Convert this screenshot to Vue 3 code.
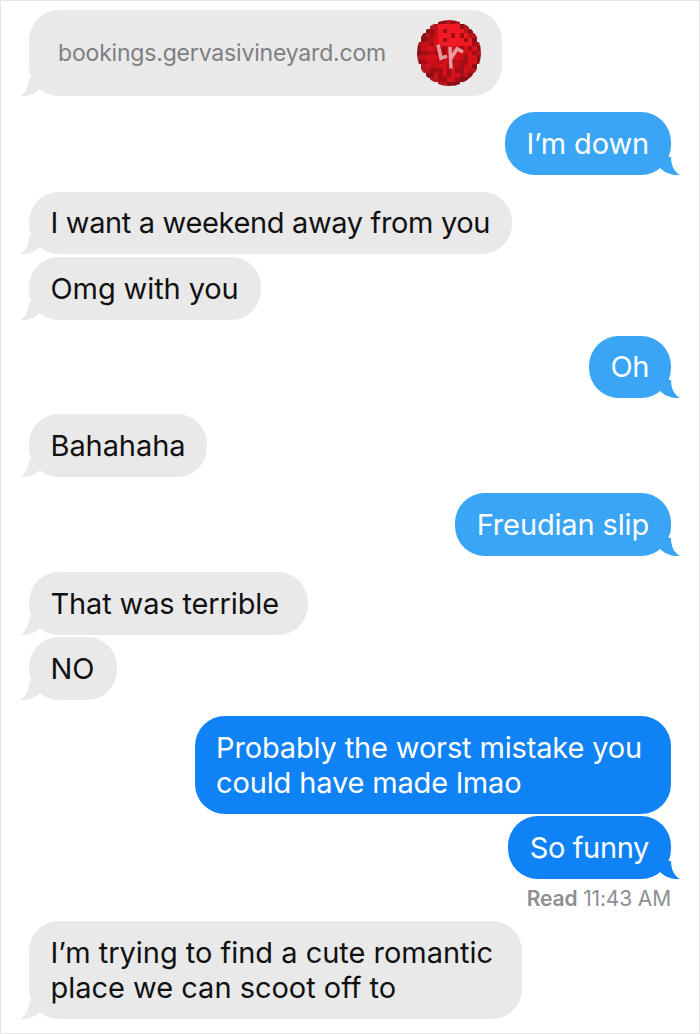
<script setup>
const messages = [
  { id: 1, side: 'in', lines: ['I want a weekend away from you'], gap: 17, spacing: -0.35 },
  { id: 2, side: 'in', lines: ['Omg with you'], gap: 3, spacing: -0.1 },
  { id: 3, side: 'out', tone: 'light', lines: ['Oh'], gap: 16, spacing: -0.45 },
  { id: 4, side: 'in', lines: ['Bahahaha'], gap: 16, spacing: -0.08 },
  { id: 5, side: 'out', tone: 'light', lines: ['Freudian slip'], gap: 16.5, spacing: -0.15 },
  { id: 6, side: 'in', lines: ['That was terrible'], gap: 16.5, spacing: -0.14, wide: true },
  { id: 7, side: 'in', lines: ['NO'], gap: 2.5, spacing: 0 },
  { id: 8, side: 'out', lines: ['Probably the worst mistake you', 'could have made lmao'], gap: 16.5, spacing: -0.15, noTail: true, wide: true },
  { id: 9, side: 'out', lines: ['So funny'], gap: 2.5, spacing: -0.35 },
]

// blocky low-res favicon, the reference is an upscaled thumbnail
const size = 15
const cell = 64 / size
const pixels = []
for (let row = 0; row < size; row++) {
  for (let col = 0; col < size; col++) {
    const dist = Math.hypot(col - 7, row - 7)
    if (dist > 7.6) continue
    const shade = Math.abs((Math.sin(col * 12.9 + row * 78.2) * 437.5) % 1)
    let fill = shade > 0.6 ? '#d81019' : shade > 0.3 ? '#c40f18' : '#a50d14'
    if (row < 6 && col > 4 && shade > 0.3) fill = '#f01a24'
    if (row > 10) fill = shade > 0.5 ? '#d5121b' : '#a30e15'
    if (dist > 6.4) fill = shade > 0.5 ? '#b8141c' : '#8c1015'
    pixels.push({ x: col * cell, y: row * cell, fill })
  }
}
</script>

<template>
  <div class="thread">
    <div class="bubble in link">
      <span class="link-text">bookings.gervasivineyard.com</span>
      <svg class="favicon" viewBox="0 0 64 64" preserveAspectRatio="none" shape-rendering="crispEdges" aria-hidden="true">
        <rect
          v-for="(p, i) in pixels"
          :key="i"
          :x="p.x"
          :y="p.y"
          :width="cell + 0.3"
          :height="cell + 0.3"
          :fill="p.fill"
        />
        <path
          d="M21 24 L24 37 L30 35 M33 26 L34 47 M34 37 L40 28 L46 31"
          fill="none"
          stroke="#e89a9e"
          stroke-width="3.5"
          shape-rendering="auto"
        />
      </svg>
      <svg class="tail" viewBox="0 0 20 18" aria-hidden="true">
        <path d="M9 0 C9 8 6 15 0 18 C6 18.5 14 17 20 11 L20 0 Z" />
      </svg>
    </div>

    <div class="bubble out light first-out">
      I’m down
      <svg class="tail" viewBox="0 0 20 18" aria-hidden="true">
        <path d="M9 0 C9 8 6 15 0 18 C6 18.5 14 17 20 11 L20 0 Z" />
      </svg>
    </div>

    <div
      v-for="m in messages"
      :key="m.id"
      class="bubble"
      :class="[m.side, m.tone, { wide: m.wide }]"
      :style="{ marginTop: m.gap + 'px', letterSpacing: m.spacing + 'px' }"
    >
      <div v-for="line in m.lines" :key="line">{{ line }}</div>
      <svg v-if="!m.noTail" class="tail" viewBox="0 0 20 18" aria-hidden="true">
        <path d="M9 0 C9 8 6 15 0 18 C6 18.5 14 17 20 11 L20 0 Z" />
      </svg>
    </div>

    <div class="receipt"><b>Read</b> 11:43 AM</div>

    <div class="bubble in last wide">
      <div>I’m trying to find a cute romantic</div>
      <div>place we can scoot off to</div>
      <svg class="tail" viewBox="0 0 20 18" aria-hidden="true">
        <path d="M9 0 C9 8 6 15 0 18 C6 18.5 14 17 20 11 L20 0 Z" />
      </svg>
    </div>
  </div>
</template>

<style scoped>
.thread {
  box-sizing: border-box;
  display: flex;
  flex-direction: column;
  width: 700px;
  height: 1034px;
  overflow: hidden;
  border: 1px solid #e6e6e6;
  background: #fff;
  padding: 9px 28px 0;
  font-family: Inter, "Liberation Sans", sans-serif;
  font-size: 29px;
  line-height: 35px;
  letter-spacing: -0.4px;
}

.bubble {
  position: relative;
  border-radius: 30px;
  padding: 13.75px 22px 13.75px 21.5px;
  white-space: nowrap;
}

.bubble.wide {
  padding-right: 29px;
}

.bubble.in {
  align-self: flex-start;
  background: #e9e9ea;
  color: #111;
}

.bubble.out {
  align-self: flex-end;
  background: #0f82f5;
  color: #fff;
}

.bubble.out.light {
  background: #3aa5f5;
}

.first-out {
  margin-top: 16px;
  letter-spacing: -0.15px;
}

.tail {
  position: absolute;
  bottom: 0;
  left: -9px;
  width: 20px;
  height: 18px;
  fill: #e9e9ea;
}

.out .tail {
  right: -9px;
  left: auto;
  transform: scaleX(-1);
  fill: #0f82f5;
}

.out.light .tail {
  fill: #3aa5f5;
}

.link {
  display: flex;
  align-items: center;
  justify-content: space-between;
  box-sizing: border-box;
  width: 473px;
  height: 86px;
  padding: 0 21px 0 29px;
}

.link-text {
  color: #7f7f82;
  font-size: 23px;
  letter-spacing: -0.18px;
}

.favicon {
  width: 64px;
  height: 66px;
  border-radius: 50%;
  filter: blur(0.6px);
}

.receipt {
  align-self: flex-end;
  margin-top: 8.5px;
  font-size: 21px;
  line-height: 24px;
  letter-spacing: -0.15px;
  color: #8e8e93;
}

.receipt b {
  font-weight: 600;
}

.last {
  margin-top: 10px;
  letter-spacing: -0.02px;
}
</style>

<style>
body {
  background: #fff;
}
</style>
